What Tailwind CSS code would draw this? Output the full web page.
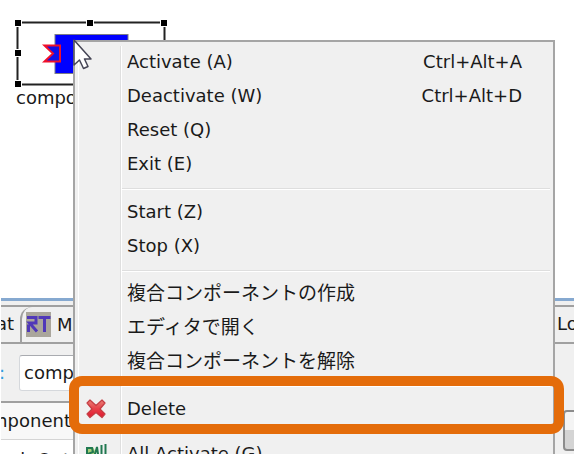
<!DOCTYPE html>
<html lang="ja">
<head>
<meta charset="utf-8">
<meta name="viewport" content="width=device-width, initial-scale=1">
<title>System Editor</title>
<script src="https://cdn.jsdelivr.net/npm/@tailwindcss/browser@4"></script>
</head>
<body class="bg-white text-[#1a1a1a] font-['DejaVu_Sans','Noto_Sans_CJK_JP',sans-serif] text-[18px] leading-[34px]">
<div class="h-screen pb-px pl-px">
<div class="relative flex h-full flex-col overflow-hidden">

  <!-- Diagram canvas -->
  <main class="h-[298px] shrink-0 pt-[18px] pl-[14px]">
    <svg class="block" width="154" height="70" viewBox="15 18 154 70" aria-label="Component">
      <rect x="17.5" y="22.5" width="147" height="62" fill="#fff" stroke="#222" stroke-width="2"/>
      <rect x="55" y="34.500" width="73" height="39" fill="#00f" stroke="#7c7c86"/>
      <path d="M44.500 45.500H60V61.500H44.500L53 53.500Z" fill="#1010e8" stroke="#f0102a" stroke-width="2"/>
      <g fill="#000" stroke="#fff"><rect x="14.500" y="19.500" width="7" height="7"/><rect x="86.500" y="19.500" width="7" height="7"/><rect x="160.500" y="19.500" width="7" height="7"/><rect x="14.500" y="49.500" width="7" height="7"/><rect x="14.500" y="80.500" width="7" height="7"/></g>
    </svg>
    <p class="pl-px leading-[20px]">component0</p>
  </main>

  <!-- Property views -->
  <section class="flex min-h-0 flex-1 flex-col overflow-hidden bg-[#f0f0f0]">
    <div class="h-[9px] shrink-0 border-t-3 border-b-2 border-t-[#86a9d0] border-b-[#a0a0a0]"></div>
    <div class="flex h-[37px] shrink-0 border-b-2 border-[#a0a0a0]">
      <a href="#at" class="w-[19px] shrink-0 overflow-hidden"><span class="float-right pr-1.5">at</span></a>
      <a href="#manager" class="flex shrink-0 items-center rounded-tl-xl border-l-2 border-[#a0a0a0] pl-1">
        <svg width="25" height="25" viewBox="0 0 25 25"><rect width="25" height="25" fill="#aaa69c"/><path d="M1 5.500H10V11H3.500L11 19.500M2.500 20V12.500M12.500 5.500H24.500M18.500 5.500V20" fill="none" stroke="#5038b8" stroke-width="3"/></svg>
        <span class="pl-1.5">Ma</span>
      </a>
      <a href="#log" class="ml-auto w-[17px] shrink-0 overflow-hidden whitespace-nowrap">Log</a>
    </div>
    <div class="flex h-[57px] shrink-0 items-center">
      <label for="component" class="w-[18px] shrink-0 overflow-hidden text-[#2f9ce0]"><span class="float-right pr-[14px]">:</span></label>
      <input id="component" value="component0" class="h-[36px] w-[180px] rounded-[3px] border border-[#d5d8dc] border-t-[#a9abb0] bg-white px-1 outline-none">
    </div>
    <div class="flex shrink-0">
      <table class="w-[300px] shrink-0 table-fixed border-t-2 border-[#a0a0a0] bg-white text-left">
        <thead><tr><th class="h-[37px] border-b border-[#d5d5d5] bg-[#f8f8f8] p-0 font-normal"><span class="block w-[70px] overflow-hidden"><span class="float-right">component</span></span></th></tr></thead>
        <tbody><tr><td class="p-0 pt-[3px]"><span class="block w-[69px] overflow-hidden"><span class="float-right whitespace-nowrap">sub.Out</span></span></td></tr></tbody>
      </table>
      <button type="button" aria-label="Edit" class="mt-[9px] ml-auto -mr-[60px] h-[41px] w-[71px] rounded border-2 border-[#8c8c8c] bg-linear-to-b from-[#f4f4f4] from-50% to-[#d4d4d4] to-50%"></button>
    </div>
  </section>

  <!-- Context menu -->
  <div role="menu" class="absolute top-[40px] right-[19px] left-[72px] border-2 border-[#a5a5a5] bg-[#f0f0f0] p-[3px]">
    <div class="flex flex-col border-l border-white before:absolute before:top-1 before:bottom-0 before:left-[45px] before:w-[2px] before:border-l before:border-[#dfdfdf] before:bg-white">
      <button role="menuitem" class="flex h-[34px] items-center justify-between pr-[28px] pl-[48px]"><span>Activate (A)</span><kbd class="font-[inherit] text-[18px]">Ctrl+Alt+A</kbd></button>
      <button role="menuitem" class="flex h-[34px] items-center justify-between pr-[28px] pl-[48px]"><span>Deactivate (W)</span><kbd class="font-[inherit] text-[18px]">Ctrl+Alt+D</kbd></button>
      <button role="menuitem" class="flex h-[34px] items-center pl-[48px]">Reset (Q)</button>
      <button role="menuitem" class="flex h-[34px] items-center pl-[48px]">Exit (E)</button>
      <hr class="mt-[7px] mb-[6px] ml-[42px] h-px border-0 bg-[#dedede] shadow-[0_1px_white]">
      <button role="menuitem" class="flex h-[34px] items-center pl-[48px]">Start (Z)</button>
      <button role="menuitem" class="flex h-[34px] items-center pl-[48px]">Stop (X)</button>
      <hr class="mt-[7px] mb-[6px] ml-[42px] h-px border-0 bg-[#dedede] shadow-[0_1px_white]">
      <button role="menuitem" class="flex h-[34px] items-center pb-1 pl-[48px] font-['Noto_Sans_CJK_JP',sans-serif] text-[19px]">複合コンポーネントの作成</button>
      <button role="menuitem" class="flex h-[34px] items-center pb-1 pl-[48px] font-['Noto_Sans_CJK_JP',sans-serif] text-[19px]">エディタで開く</button>
      <button role="menuitem" class="flex h-[34px] items-center pb-1 pl-[48px] font-['Noto_Sans_CJK_JP',sans-serif] text-[19px]">複合コンポーネントを解除</button>
      <hr class="my-[6px] ml-[42px] h-px border-0 bg-[#dedede] shadow-[0_1px_white]">
      <button role="menuitem" class="relative flex h-[34px] items-center pl-[6px]">
        <span class="w-[42px]"><svg width="22" height="22" viewBox="0 0 22 22"><defs><linearGradient id="red" x2="0" y2="1"><stop stop-color="#e88078"/><stop offset=".5" stop-color="#e84048"/><stop offset="1" stop-color="#e01830"/></linearGradient></defs><path d="M5 2L11 7.500L17 2L20 5L15 11L20 16L17 19.500L11 14.500L5 19.500L2 16L7 11L2 5Z" fill="url(#red)" stroke="#c43c42" stroke-width="1.200" stroke-linejoin="round"/></svg></span>
        <span>Delete</span>
        <span class="pointer-events-none absolute -top-[16px] -right-[14px] -bottom-[8px] -left-[10px] rounded-[13px] border-10 border-[#e46c0a]"></span>
      </button>
      <hr class="my-[6px] ml-[42px] h-px border-0 bg-[#dedede] shadow-[0_1px_white]">
      <button role="menuitem" class="flex h-[34px] items-center pb-1 pl-[6px]">
        <span class="w-[42px]"><svg width="22" height="22" viewBox="0 0 22 22"><path d="M1 4H8L11 10V18H1Z" fill="#a7cf78"/><path d="M2 18V5H7L8 9L3 11M8 18L12 4L14 18M9 12H14M16.500 18V2M20.500 18V1" fill="none" stroke="#207850" stroke-width="2"/></svg></span>
        <span>All Activate (G)</span>
      </button>
    </div>
  </div>

  <!-- Mouse pointer -->
  <svg class="pointer-events-none absolute top-[39px] left-[72px]" width="20" height="32" viewBox="0 0 20 32"><path d="M1 1V26L6.500 21L10.500 29.500L15 27.500L11.500 20H18Z" fill="#fff" stroke="#454555" stroke-width="1.500" stroke-linejoin="round"/></svg>
</div>
</div>
</body>
</html>
